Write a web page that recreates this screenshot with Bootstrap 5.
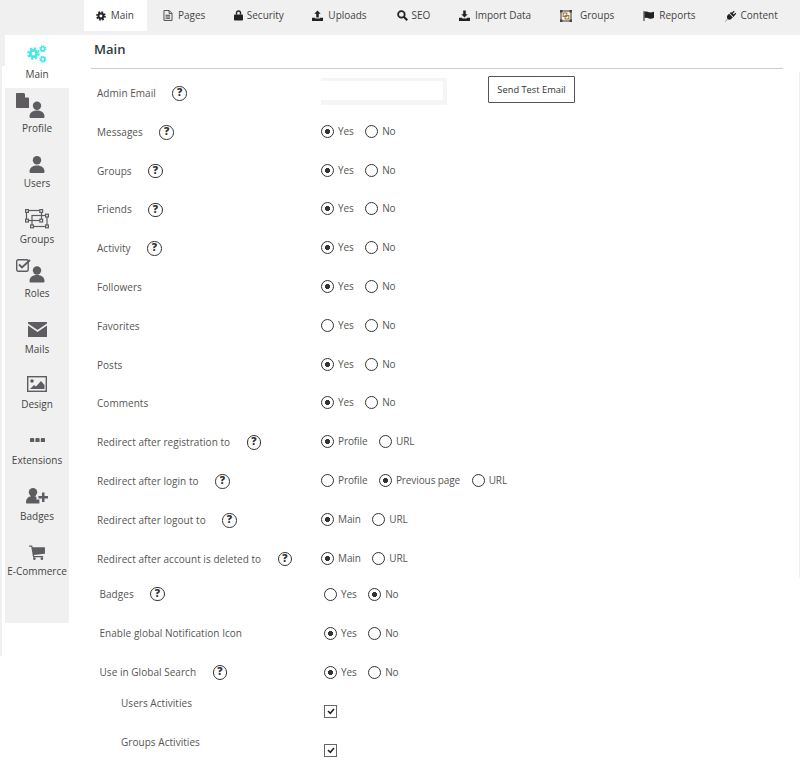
<!DOCTYPE html>
<html lang="en">
<head>
<meta charset="utf-8">
<title>Main settings</title>
<link rel="stylesheet" href="https://cdn.jsdelivr.net/npm/bootstrap@5.3.0/dist/css/bootstrap.min.css">
<style>
html,body{height:765px;overflow:hidden;background:#fff}
body{font-family:"Open Sans",sans-serif;font-size:10px;color:#555}
.topstrip{height:35px;background:#f0f0f0;padding-left:84px}
.toptab{height:31px;padding:0 13px 0 12px;margin-right:4px;color:#444;font-size:10px;gap:5px;text-decoration:none;letter-spacing:-.02px}
.toptab.here{background:#fff;margin-right:4px;width:63px}
.toptab svg{fill:#333;display:block}
.toptab.m35{margin-right:3.5px}
.toptab.m5{margin-right:5px}
.toptab.g4{gap:4px}
.toptab.g8{gap:8px}
.rail{width:69px;height:621px;border-left:2px solid #f0f0f0;flex:none;padding-left:3px;position:relative}
.railhead{position:absolute;left:0;top:0;width:3px;height:31px;background:#f0f0f0}
.sidelist{width:64px;height:535px;background:#f0f0f0;margin-top:53px}
.sideitem{width:64px;flex:none;color:#444;text-decoration:none;line-height:16px;font-size:10px;white-space:nowrap}
.sideitem svg{display:block;fill:#5e5c60;flex:none}
.hmain{height:53px;margin-top:-53px;background:#fff;margin-left:-3px;width:67px;padding:0 0 6px 3px}
.h48{height:48px}.h54{height:54.5px}.h55{height:55px}.h56{height:55.8px}
.b2{margin-bottom:2px}.b3{margin-bottom:3px}.b4{margin-bottom:3.7px}.b10{margin-bottom:9.7px}
.sheet{flex:1;padding:0 17px 0 22px;min-width:0}
.pagetitle{font-size:13px;font-weight:600;color:#2b3a42;line-height:18px;padding:5px 0 0 3px;height:33.5px;border-bottom:1px solid #ccc;margin:0}
.framed{margin:3.500px -17px 0 0;padding-top:2.100px;border-right:1px solid #f0f0f0}
.setline{height:38.8px;padding-left:6px}
.setname{width:224px;flex:none;color:#555;font-size:10px;letter-spacing:.04px}
.helpdot{width:14.5px;height:14.5px;border:1.5px solid #333;border-radius:50%;color:#333;font-weight:800;font-size:10.500px;line-height:11.500px;text-align:center;margin-left:16.500px;flex:none}
.opts{gap:11.5px;margin-top:-2px}
.opt{gap:4px;color:#555;font-size:10px;line-height:13px;margin:0;letter-spacing:-.1px}
.ringbox{appearance:none;width:13px;height:13px;margin:0;border:1px solid #333;border-radius:50%;background:radial-gradient(circle,#333 0 2.3px,#fff 2.8px);float:none}
.ringbox:not(:checked){background:#fff}
.tickbox{appearance:none;width:13px;height:13px;margin:0;border:1.5px solid #666;background:#fff url("data:image/svg+xml,%3Csvg xmlns='http://www.w3.org/2000/svg' viewBox='0 0 10 10'%3E%3Cpath d='M2 5l2.300 2.300L8 3' fill='none' stroke='%23222' stroke-width='1.600'/%3E%3C/svg%3E") center/10px no-repeat}
.mailbox{width:126px;height:27px;border:solid #f5f5f5;border-width:3px 4px 5px 0;background:#fff;margin-top:-3px;display:block;padding:0;outline:0}
.testbtn{width:87px;height:27px;border:1px solid #555;border-radius:1px;background:#fff;color:#333;font-size:9.300px;margin-left:41px;margin-top:-7px;padding:0}
.lift{margin-top:-3.800px}
.nudge{margin-top:1px}
.shift{padding-left:8.500px}
.shift .setname{width:224.500px}
.shift .opts{margin-top:0}
.sub{padding-left:30px;margin-top:-4px}
.sub .setname{width:203px;margin-top:-8px}
.sub+.sub{margin-top:0}
.sub .tickbox{margin-top:8px}
</style>
</head>
<body>
<nav class="topstrip d-flex">
  <a class="toptab here d-flex align-items-center" href="#"><svg width="10" height="10" viewBox="0 0 12 12"><circle cx="6" cy="6" r="3" fill="none" stroke="#222" stroke-width="2.400"/><circle cx="6" cy="6" r="4.900" fill="none" stroke="#222" stroke-width="2" stroke-dasharray="2.100 1.750"/></svg>Main</a>
  <a class="toptab m35 d-flex align-items-center" href="#"><svg width="10" height="11" viewBox="0 0 10 12"><path d="M.6.6h5.800l3 3v7.800H.6z M6.200.8v3h3" fill="none" stroke="#444" stroke-width="1"/><path d="M2.300 5.300h5v1h-5zM2.300 7.100h5v1h-5zM2.300 8.900h5v1h-5z" fill="#444"/></svg>Pages</a>
  <a class="toptab m35 g4 d-flex align-items-center" href="#"><svg width="9" height="11" viewBox="0 0 9 11"><path d="M2.500 4.500V3a2 2 0 0 1 4 0v1.500" fill="none" stroke="#222" stroke-width="1.400"/><rect y="4.500" width="9" height="6" rx=".8" fill="#222"/></svg>Security</a>
  <a class="toptab m5 d-flex align-items-center" href="#"><svg width="11" height="11" viewBox="0 0 12 12"><path d="M6 .5l3.500 3.700H7.400v4H4.600v-4H2.500zM0 8.500h3.500v.9h5v-.9H12V12H0z" fill="#222"/></svg>Uploads</a>
  <a class="toptab m35 g4 d-flex align-items-center" href="#"><svg width="11" height="11" viewBox="0 0 10 10"><circle cx="4" cy="4" r="3" fill="none" stroke="#222" stroke-width="1.600"/><path d="M6.200 6.200L9.300 9.300" stroke="#222" stroke-width="1.900"/></svg>SEO</a>
  <a class="toptab d-flex align-items-center" href="#"><svg width="11" height="11" viewBox="0 0 12 12"><path d="M4.600.5h2.800v4h2.100L6 8.200 2.500 4.500h2.100zM0 8.500h3.500v.9h5v-.9H12V12H0z" fill="#222"/></svg>Import Data</a>
  <a class="toptab g8 d-flex align-items-center" href="#"><svg width="12" height="12" viewBox="0 0 12 12"><rect x="1" y="1" width="10" height="10" fill="none" stroke="#5f574a" stroke-width="1.200"/><rect x="3.200" y="3" width="3.600" height="3.500" fill="none" stroke="#a8762f" stroke-width="1"/><rect x="5.200" y="5.500" width="3.600" height="3.500" fill="none" stroke="#a8762f" stroke-width="1"/><path d="M0 0h2.500v2.500H0zM9.500 0H12v2.500H9.500zM0 9.500h2.500V12H0zM9.500 9.500H12V12H9.500z" fill="#444"/></svg>Groups</a>
  <a class="toptab d-flex align-items-center" href="#"><svg width="11" height="10" viewBox="0 0 11 10"><path d="M.5 0h1v10h-1z" fill="#222"/><path d="M1.500 1c2-1 3 0 4.500.3 1.500.3 3 0 5-.5v6c-2 1-3.500 1-5 .6-1.500-.4-2.500-1-4.500-.2z" fill="#222"/></svg>Reports</a>
  <a class="toptab d-flex align-items-center" href="#"><svg width="11" height="12" viewBox="0 0 12 12"><path d="M0 12l2.700-2.800C1.800 7.700 2 6 3 5l1.500-1.500L8.500 7.500 7 9c-1.200 1.100-2.800 1.300-4.200.5L.6 12z" fill="#222"/><path d="M5.200 2.900L6.600 1.500l4 4L9.200 7zM6.800 3.200L9.500.4l1 1L7.800 4.200zM8.700 5.200l2.700-2.800 1 1-2.700 2.800z" fill="#222"/></svg>Content</a>
</nav>
<div class="d-flex">
  <aside class="rail">
    <div class="railhead"></div>
    <div class="sidelist d-flex flex-column">
      <a class="sideitem hmain d-flex flex-column align-items-center justify-content-end" href="#">
        <svg class="b3" width="20" height="18" viewBox="0 0 20 18"><g fill="none" stroke="#3fe6ea"><circle cx="6.500" cy="8.500" r="3.200" stroke-width="2.600"/><circle cx="6.500" cy="8.500" r="5.300" stroke-width="2" stroke-dasharray="2.200 1.960"/><circle cx="15.800" cy="3.700" r="1.900" stroke-width="1.400"/><circle cx="15.800" cy="3.700" r="3" stroke-width="1.200" stroke-dasharray="1.300 1.060"/><circle cx="15.800" cy="14.200" r="1.900" stroke-width="1.400"/><circle cx="15.800" cy="14.200" r="3" stroke-width="1.200" stroke-dasharray="1.300 1.060"/></g></svg>
        Main</a>
      <a class="sideitem h48 d-flex flex-column align-items-center justify-content-end" href="#">
        <svg class="b2" width="42" height="25" viewBox="0 0 42 25"><path d="M0 1c0-.6.4-1 1-1h7l5 5v10H1c-.6 0-1-.4-1-1z"/><path d="M9 0v4.500h4.500z" fill="#f0f0f0"/><circle cx="21" cy="12.800" r="4.200"/><path d="M15 25c-1 0-1.500-.5-1.500-1.300 0-3.700 2.700-6.200 7.500-6.200s7.500 2.500 7.500 6.200c0 .8-.5 1.300-1.500 1.300z"/></svg>
        Profile</a>
      <a class="sideitem h55 d-flex flex-column align-items-center justify-content-end" href="#">
        <svg class="b2" width="16" height="17" viewBox="0 0 16 17"><circle cx="8" cy="4.300" r="4.200"/><path d="M2 17c-1 0-1.500-.5-1.500-1.300C.5 12 3.200 9.500 8 9.500s7.500 2.500 7.500 6.200c0 .8-.5 1.300-1.500 1.300z"/></svg>
        Users</a>
      <a class="sideitem h56 d-flex flex-column align-items-center justify-content-end" href="#">
        <svg class="b2" width="24" height="19.500" viewBox="0 0 24 19.500"><g fill="none" stroke="#5e5c60" stroke-width="1.200"><rect x="1.500" y="1.500" width="15" height="10"/><rect x="7" y="6.500" width="15" height="11"/></g><g fill="#f0f0f0" stroke="#5e5c60" stroke-width="1.200"><rect x=".6" y=".6" width="2.800" height="2.800"/><rect x="14.800" y=".6" width="2.800" height="2.800"/><rect x=".6" y="10.200" width="2.800" height="2.800"/><rect x="14.800" y="10.200" width="2.800" height="2.800"/><rect x="20.600" y="5.200" width="2.800" height="2.800"/><rect x="20.600" y="16" width="2.800" height="2.800"/><rect x="5.600" y="16" width="2.800" height="2.800"/></g></svg>
        Groups</a>
      <a class="sideitem h54 d-flex flex-column align-items-center justify-content-end" href="#">
        <svg class="b2" width="42" height="24" viewBox="0 0 42 24"><rect x=".7" y=".7" width="11.500" height="11.500" rx="1.500" fill="none" stroke="#5e5c60" stroke-width="1.400"/><path d="M3 5.500l3 3 8-7.500" fill="none" stroke="#5e5c60" stroke-width="1.900"/><circle cx="21" cy="11.500" r="4.200"/><path d="M15 23.500c-1 0-1.500-.5-1.500-1.300 0-3.700 2.700-6.200 7.500-6.200s7.500 2.500 7.500 6.200c0 .8-.5 1.300-1.500 1.300z"/></svg>
        Roles</a>
      <a class="sideitem h56 d-flex flex-column align-items-center justify-content-end" href="#">
        <svg class="b4" width="19" height="15" viewBox="0 0 19 15"><path d="M0 0h19v1.500L9.500 8 0 1.500z"/><path d="M0 3.500l9.500 6.500L19 3.500V15H0z"/></svg>
        Mails</a>
      <a class="sideitem h55 d-flex flex-column align-items-center justify-content-end" href="#">
        <svg class="b4" width="20" height="16" viewBox="0 0 20 16"><rect x=".7" y=".7" width="18.600" height="14.600" fill="none" stroke="#5e5c60" stroke-width="1.400"/><circle cx="5" cy="5" r="1.800"/><path d="M3 13l4-4 2 1.500L14 5l3.500 4v4z"/></svg>
        Design</a>
      <a class="sideitem h56 d-flex flex-column align-items-center justify-content-end" href="#">
        <svg class="b10" width="15" height="4.500" viewBox="0 0 15 4.500"><rect width="4.200" height="4.500" rx="1"/><rect x="5.400" width="4.200" height="4.500" rx="1"/><rect x="10.800" width="4.200" height="4.500" rx="1"/></svg>
        Extensions</a>
      <a class="sideitem h56 d-flex flex-column align-items-center justify-content-end" href="#">
        <svg class="b4" width="22" height="16" viewBox="0 0 22 16"><circle cx="7" cy="4.200" r="4.200"/><path d="M1 15.500c-.7 0-1-.4-1-1.200C0 10.500 2.500 8 7 8c1.500 0 2.500.3 3.400.7V11.500h3v4z"/><path d="M16 4.500h2.500V8H22v2.500h-3.500V14H16v-3.500h-3.500V8H16z"/></svg>
        Badges</a>
      <a class="sideitem h56 d-flex flex-column align-items-center justify-content-end" href="#">
        <svg class="b4" width="18" height="15" viewBox="0 0 18 17"><path d="M0 .5h3.500l.6 2H18v7.500L5.500 11.200l.3 1.300H16V14H4.500L2.500 2H0z"/><circle cx="6" cy="15.500" r="1.500"/><circle cx="14.500" cy="15.500" r="1.500"/></svg>
        E-Commerce</a>
    </div>
  </aside>
  <main class="sheet">
    <h1 class="pagetitle">Main</h1>
    <form>
      <div class="framed">
      <div class="setline d-flex align-items-center">
        <div class="setname d-flex align-items-center">Admin Email<span class="helpdot">?</span></div>
        <input class="mailbox" type="text" aria-label="Admin Email">
        <button class="testbtn" type="button">Send Test Email</button>
      </div>
      <div class="setline d-flex align-items-center"><div class="setname d-flex align-items-center">Messages<span class="helpdot">?</span></div><div class="opts d-flex"><label class="opt d-flex"><input class="ringbox" type="radio" name="a" checked>Yes</label><label class="opt d-flex"><input class="ringbox" type="radio" name="a">No</label></div></div>
      <div class="setline d-flex align-items-center"><div class="setname d-flex align-items-center">Groups<span class="helpdot">?</span></div><div class="opts d-flex"><label class="opt d-flex"><input class="ringbox" type="radio" name="b" checked>Yes</label><label class="opt d-flex"><input class="ringbox" type="radio" name="b">No</label></div></div>
      <div class="setline d-flex align-items-center"><div class="setname d-flex align-items-center">Friends<span class="helpdot">?</span></div><div class="opts d-flex"><label class="opt d-flex"><input class="ringbox" type="radio" name="c" checked>Yes</label><label class="opt d-flex"><input class="ringbox" type="radio" name="c">No</label></div></div>
      <div class="setline d-flex align-items-center"><div class="setname d-flex align-items-center">Activity<span class="helpdot">?</span></div><div class="opts d-flex"><label class="opt d-flex"><input class="ringbox" type="radio" name="d" checked>Yes</label><label class="opt d-flex"><input class="ringbox" type="radio" name="d">No</label></div></div>
      <div class="setline d-flex align-items-center"><div class="setname">Followers</div><div class="opts d-flex"><label class="opt d-flex"><input class="ringbox" type="radio" name="e" checked>Yes</label><label class="opt d-flex"><input class="ringbox" type="radio" name="e">No</label></div></div>
      <div class="setline d-flex align-items-center"><div class="setname">Favorites</div><div class="opts d-flex"><label class="opt d-flex"><input class="ringbox" type="radio" name="f">Yes</label><label class="opt d-flex"><input class="ringbox" type="radio" name="f">No</label></div></div>
      <div class="setline d-flex align-items-center"><div class="setname">Posts</div><div class="opts d-flex"><label class="opt d-flex"><input class="ringbox" type="radio" name="g" checked>Yes</label><label class="opt d-flex"><input class="ringbox" type="radio" name="g">No</label></div></div>
      <div class="setline d-flex align-items-center"><div class="setname">Comments</div><div class="opts d-flex"><label class="opt d-flex"><input class="ringbox" type="radio" name="h" checked>Yes</label><label class="opt d-flex"><input class="ringbox" type="radio" name="h">No</label></div></div>
      <div class="setline d-flex align-items-center"><div class="setname d-flex align-items-center">Redirect after registration to<span class="helpdot">?</span></div><div class="opts d-flex"><label class="opt d-flex"><input class="ringbox" type="radio" name="i" checked>Profile</label><label class="opt d-flex"><input class="ringbox" type="radio" name="i">URL</label></div></div>
      <div class="setline d-flex align-items-center"><div class="setname d-flex align-items-center">Redirect after login to<span class="helpdot">?</span></div><div class="opts d-flex"><label class="opt d-flex"><input class="ringbox" type="radio" name="j">Profile</label><label class="opt d-flex"><input class="ringbox" type="radio" name="j" checked>Previous page</label><label class="opt d-flex"><input class="ringbox" type="radio" name="j">URL</label></div></div>
      <div class="setline d-flex align-items-center"><div class="setname d-flex align-items-center">Redirect after logout to<span class="helpdot">?</span></div><div class="opts d-flex"><label class="opt d-flex"><input class="ringbox" type="radio" name="k" checked>Main</label><label class="opt d-flex"><input class="ringbox" type="radio" name="k">URL</label></div></div>
      <div class="setline d-flex align-items-center"><div class="setname d-flex align-items-center">Redirect after account is deleted to<span class="helpdot">?</span></div><div class="opts d-flex"><label class="opt d-flex"><input class="ringbox" type="radio" name="l" checked>Main</label><label class="opt d-flex"><input class="ringbox" type="radio" name="l">URL</label></div></div>
      </div>
      <div class="setline shift lift d-flex align-items-center"><div class="setname d-flex align-items-center">Badges<span class="helpdot">?</span></div><div class="opts d-flex"><label class="opt d-flex"><input class="ringbox" type="radio" name="m">Yes</label><label class="opt d-flex"><input class="ringbox" type="radio" name="m" checked>No</label></div></div>
      <div class="setline shift nudge d-flex align-items-center"><div class="setname">Enable global Notification Icon</div><div class="opts d-flex"><label class="opt d-flex"><input class="ringbox" type="radio" name="n" checked>Yes</label><label class="opt d-flex"><input class="ringbox" type="radio" name="n">No</label></div></div>
      <div class="setline shift d-flex align-items-center"><div class="setname d-flex align-items-center">Use in Global Search<span class="helpdot">?</span></div><div class="opts d-flex"><label class="opt d-flex"><input class="ringbox" type="radio" name="o" checked>Yes</label><label class="opt d-flex"><input class="ringbox" type="radio" name="o">No</label></div></div>
      <div class="setline sub d-flex align-items-center"><div class="setname">Users Activities</div><input class="tickbox" type="checkbox" checked aria-label="Users Activities"></div>
      <div class="setline sub d-flex align-items-center"><div class="setname">Groups Activities</div><input class="tickbox" type="checkbox" checked aria-label="Groups Activities"></div>
    </form>
  </main>
</div>
</body>
</html>
